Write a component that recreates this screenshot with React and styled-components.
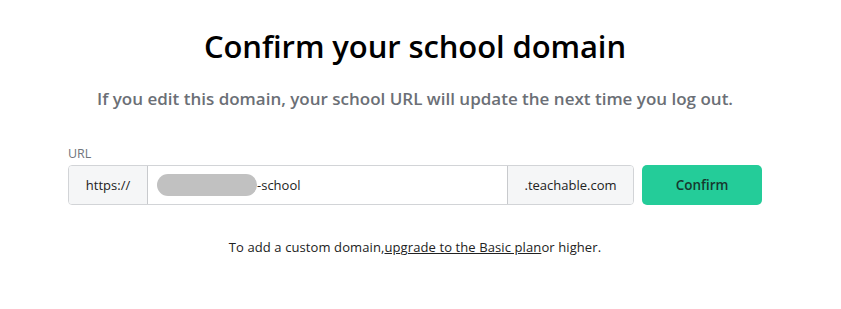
import React from "react";
import styled, { createGlobalStyle } from "styled-components";

const GlobalStyle = createGlobalStyle`
  html, body { margin: 0; padding: 0; background: #ffffff; }
  body { font-family: "Open Sans", "Noto Sans", "Liberation Sans", sans-serif; color: #1f2328; }
  * { box-sizing: border-box; }
`;

const Page = styled.div`
  width: 841px;
  height: 309px;
  padding: 26px 0 0 68px;
`;

const Column = styled.div`
  width: 694px;
  display: flex;
  flex-direction: column;
  align-items: center;
`;

const Title = styled.h1`
  margin: 0;
  font-size: 31px;
  line-height: 40px;
  font-weight: 600;
  color: #000000;
  letter-spacing: -0.1px;
`;

const Subtitle = styled.p`
  margin: 21px 0 0;
  font-size: 17px;
  line-height: 24px;
  font-weight: 600;
  color: #6b6f76;
`;

const Field = styled.div`
  align-self: stretch;
  margin-top: 34px;
  display: flex;
  flex-direction: column;
  gap: 3px;
`;

const Label = styled.label`
  font-size: 12.5px;
  line-height: 17px;
  color: #70757c;
`;

const Row = styled.div`
  display: flex;
  align-items: stretch;
  height: 40px;
  gap: 8px;
`;

const Group = styled.div`
  display: flex;
  width: 566px;
  border: 1px solid #d2d4d7;
  border-radius: 4px;
  overflow: hidden;
`;

const Addon = styled.div`
  display: flex;
  align-items: center;
  justify-content: center;
  width: ${(p) => p.$w}px;
  flex: none;
  background: #f5f6f7;
  font-size: 13px;
  color: #222;
  border-left: ${(p) => (p.$divider ? "1px solid #c8cacd" : "none")};
  border-right: ${(p) => (p.$right ? "1px solid #c8cacd" : "none")};
`;

const InputBox = styled.div`
  flex: 1;
  display: flex;
  align-items: center;
  padding-left: 9px;
  background: #fff;
  font-size: 13px;
  color: #222;
`;

const Blur = styled.span`
  display: inline-block;
  width: 100px;
  height: 22px;
  border-radius: 11px;
  background: #c1c1c1;
`;

const ConfirmButton = styled.button`
  width: 120px;
  border: none;
  border-radius: 5px;
  background: #24cc99;
  color: #16382e;
  font-family: inherit;
  font-size: 13.5px;
  font-weight: 600;
  cursor: pointer;
`;

const Footer = styled.p`
  margin: 33px 0 0;
  font-size: 13px;
  line-height: 18px;
  color: #222;
  letter-spacing: 0.1px;
`;

const Link = styled.a`
  color: #222;
  text-decoration: underline;
`;

export default function App() {
  return (
    <>
      <GlobalStyle />
      <Page>
        <Column>
          <Title>Confirm your school domain</Title>
          <Subtitle>
            If you edit this domain, your school URL will update the next time you log out.
          </Subtitle>
          <Field>
            <Label>URL</Label>
            <Row>
              <Group>
                <Addon $w={79} $right>https://</Addon>
                <InputBox>
                  <Blur />
                  <span>-school</span>
                </InputBox>
                <Addon $w={126} $divider>.teachable.com</Addon>
              </Group>
              <ConfirmButton>Confirm</ConfirmButton>
            </Row>
          </Field>
          <Footer>
            To add a custom domain,<Link href="#">upgrade to the Basic plan</Link>or higher.
          </Footer>
        </Column>
      </Page>
    </>
  );
}
